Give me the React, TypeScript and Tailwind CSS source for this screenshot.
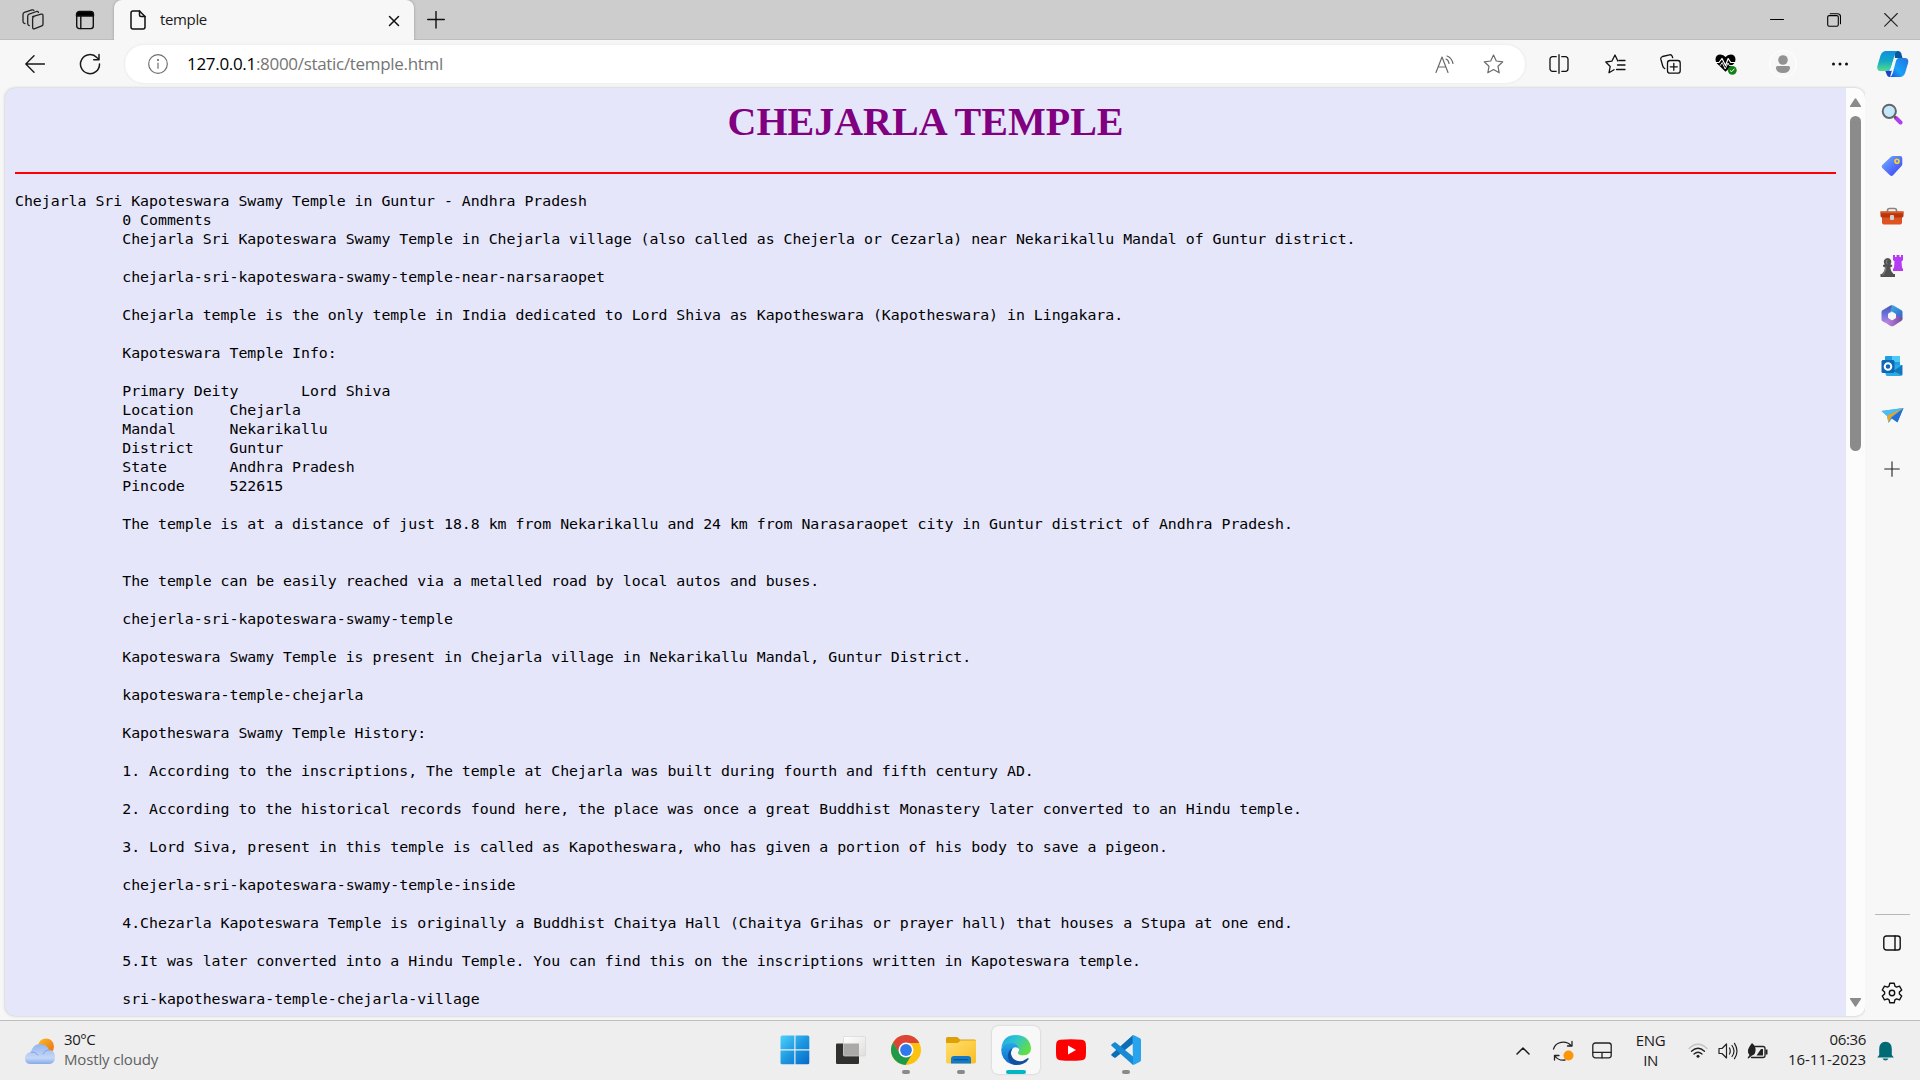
import React from "react";

type IconProps = { w: number; h: number; children: React.ReactNode; stroke?: string; sw?: number; className?: string };

function Icon({ w, h, children, stroke = "none", sw = 1.4, className = "" }: IconProps) {
  return (
    <svg
      width={w}
      height={h}
      viewBox={`0 0 ${w} ${h}`}
      fill="none"
      stroke={stroke}
      strokeWidth={sw}
      strokeLinecap="round"
      strokeLinejoin="round"
      className={`block shrink-0 ${className}`}
    >
      {children}
    </svg>
  );
}

function Slot({ className, children }: { className: string; children: React.ReactNode }) {
  return <div className={`flex shrink-0 items-center justify-center ${className}`}>{children}</div>;
}

const pad = " ".repeat(12);
const articleLines: string[] = [
  "Chejarla Sri Kapoteswara Swamy Temple in Guntur - Andhra Pradesh",
  pad + "0 Comments",
  pad + "Chejarla Sri Kapoteswara Swamy Temple in Chejarla village (also called as Chejerla or Cezarla) near Nekarikallu Mandal of Guntur district.",
  "",
  pad + "chejarla-sri-kapoteswara-swamy-temple-near-narsaraopet",
  "",
  pad + "Chejarla temple is the only temple in India dedicated to Lord Shiva as Kapotheswara (Kapotheswara) in Lingakara.",
  "",
  pad + "Kapoteswara Temple Info:",
  "",
  pad + "Primary Deity       Lord Shiva",
  pad + "Location    Chejarla",
  pad + "Mandal      Nekarikallu",
  pad + "District    Guntur",
  pad + "State       Andhra Pradesh",
  pad + "Pincode     522615",
  "",
  pad + "The temple is at a distance of just 18.8 km from Nekarikallu and 24 km from Narasaraopet city in Guntur district of Andhra Pradesh.",
  "",
  "",
  pad + "The temple can be easily reached via a metalled road by local autos and buses.",
  "",
  pad + "chejerla-sri-kapoteswara-swamy-temple",
  "",
  pad + "Kapoteswara Swamy Temple is present in Chejarla village in Nekarikallu Mandal, Guntur District.",
  "",
  pad + "kapoteswara-temple-chejarla",
  "",
  pad + "Kapotheswara Swamy Temple History:",
  "",
  pad + "1. According to the inscriptions, The temple at Chejarla was built during fourth and fifth century AD.",
  "",
  pad + "2. According to the historical records found here, the place was once a great Buddhist Monastery later converted to an Hindu temple.",
  "",
  pad + "3. Lord Siva, present in this temple is called as Kapotheswara, who has given a portion of his body to save a pigeon.",
  "",
  pad + "chejerla-sri-kapoteswara-swamy-temple-inside",
  "",
  pad + "4.Chezarla Kapoteswara Temple is originally a Buddhist Chaitya Hall (Chaitya Grihas or prayer hall) that houses a Stupa at one end.",
  "",
  pad + "5.It was later converted into a Hindu Temple. You can find this on the inscriptions written in Kapoteswara temple.",
  "",
  pad + "sri-kapotheswara-temple-chejarla-village",
];

function TabStrip() {
  return (
    <div className="flex h-10 shrink-0 bg-[#cdcdcd] shadow-[inset_0_-1px_0_#bdbdbd]">
      <Slot className="w-[65px]">
        <Icon w={24} h={24} stroke="#222" sw={1.3}>
          <path d="M11.5 8.6 20 6.2q2-.5 2 1.500v8.600q0 1.200-1.200 1.600l-7 2.700q-2.200.8-2.200-1.400v-8.400q0-1.600 1.400-2.200z" />
          <path d="M8.300 17.600q-1.600-.3-1.600-2V8.200q0-1.600 1.400-2.100L15.500 3.500q1.500-.4 2 .9" />
          <path d="M4 15.600q-2-.3-2-2V6.500q0-1.600 1.400-2.100L11 1.900q1.300-.4 1.900.6" />
        </Icon>
      </Slot>
      <Slot className="w-10">
        <Icon w={20} h={20} stroke="#111" sw={1.4}>
          <rect x="1.7" y="2.2" width="16.6" height="16.4" rx="2.5" />
          <path d="M1.500 6V4.500A3 3 0 0 1 4.500 1.500h11a3 3 0 0 1 3 3V6z" fill="#000" />
          <path d="M5.800 6v12.500" />
        </Icon>
      </Slot>
      <div className="w-[9px] shrink-0" />
      <div className="flex w-[300px] shrink-0 items-center rounded-t-lg bg-[#f7f7f7] shadow-[0_0_3px_#999] [clip-path:inset(0_-3px_0_-3px)]">
        <Icon w={16} h={20} stroke="#111" sw={1.5} className="ml-4">
          <path d="M3 1h6.500L15 6.500V17a2 2 0 0 1-2 2H3a2 2 0 0 1-2-2V3a2 2 0 0 1 2-2z" />
          <path d="M9.500 1v4a1.500 1.500 0 0 0 1.500 1.500h4" />
        </Icon>
        <span className="mb-[2px] ml-3.5 w-[220px] text-[15px] leading-5 tracking-[-0.35px] text-[#1b1b1b]">temple</span>
        <Icon w={12} h={12} stroke="#111" sw={1.5} className="ml-2 mt-px">
          <path d="M1.500 1.500l9 9M10.500 1.500l-9 9" />
        </Icon>
      </div>
      <Slot className="w-[43px]">
        <Icon w={18} h={18} stroke="#111" sw={1.4}>
          <path d="M.7 8.500h16.600M9 .5v16.500" />
        </Icon>
      </Slot>
      <div className="flex-1" />
      <Slot className="w-[57px]">
        <Icon w={14} h={14} stroke="#000" sw={1}>
          <path d="M.5 6.500h13" />
        </Icon>
      </Slot>
      <Slot className="w-[57px]">
        <Icon w={14} h={14} stroke="#000" sw={1.1}>
          <rect x=".7" y="2.6" width="10.6" height="10.6" rx="1.5" />
          <path d="M3.200.7h7.300a3 3 0 0 1 3 3v7" />
        </Icon>
      </Slot>
      <Slot className="w-[58px]">
        <Icon w={14} h={14} stroke="#222" sw={1.1}>
          <path d="M.7.500l12.600 12.600M13.300.500L.7 13.100" />
        </Icon>
      </Slot>
    </div>
  );
}

function Copilot() {
  return (
    <Icon w={32} h={28}>
      <defs>
        <linearGradient id="cpA" x1="0" y1="0" x2="0" y2="1">
          <stop offset="0" stopColor="#0f8fe0" />
          <stop offset=".5" stopColor="#12a9c4" />
          <stop offset="1" stopColor="#55dd8c" />
        </linearGradient>
        <linearGradient id="cpB" x1="0" y1="1" x2="1" y2="0">
          <stop offset="0" stopColor="#1a4fd8" />
          <stop offset=".4" stopColor="#17a3f6" />
          <stop offset="1" stopColor="#2470e0" />
        </linearGradient>
      </defs>
      <path d="M17 1h4.500q2 0 2.800 2.500L25.500 8H18z" fill="#0b55a0" />
      <path d="M8 20h7l-2 7q-2.500 0-3.200-2.200z" fill="#1743cf" />
      <path d="M9 1h12q-2.500.5-3.400 4l-3.400 12.500q-1 3.500-4.500 3.500H4q-4.600 0-3.600-5L3.500 5.500Q5 1 9 1z" fill="url(#cpA)" />
      <path d="M22 8h5.500q4.600 0 3.600 5l-3 10q-1.500 4-5.500 4H12.500q2.400-.6 3.300-4l3-11.500Q19.800 8 22 8z" fill="url(#cpB)" />
      <path d="M18.500 9.500h-2l-3 9.500q-.6 1.500-2 2h3z" fill="#f4f9fc" />
    </Icon>
  );
}

function Toolbar() {
  return (
    <div className="flex h-12 shrink-0 items-center bg-[#f7f7f7]">
      <Slot className="w-[70px]">
        <Icon w={20} h={18} stroke="#1a1a1a" sw={1.4}>
          <path d="M19.500 9H.8M9 .7.8 9 9 17.300" />
        </Icon>
      </Slot>
      <Slot className="w-10">
        <Icon w={22} h={22} stroke="#1a1a1a" sw={1.5}>
          <path d="M20.500 11A9.500 9.500 0 1 1 17.800 4.500L20 6.500M20 1.500v5.300h-5.300" />
        </Icon>
      </Slot>
      <div className="ml-[15px] flex h-[38px] w-[1400px] shrink-0 items-center rounded-full bg-white shadow-[0_0_3px_#e2e2e2]">
        <Icon w={20} h={20} stroke="#707070" sw={1.2} className="ml-[22.500px]">
          <circle cx="10" cy="10" r="9.3" />
          <path d="M10 9v5.300" />
          <circle cx="10" cy="6" r=".5" fill="#707070" />
        </Icon>
        <span className="ml-[19.500px] w-[1228px] shrink-0 whitespace-nowrap text-[17px] leading-6 tracking-[-0.310px] text-[#757575]">
          <span className="text-black">127.0.0.1</span>:8000/static/temple.html
        </span>
        <Slot className="w-[60px]">
          <Icon w={20} h={19} stroke="#6b6b6b" sw={1.2}>
            <path d="M1 17.500 7 2l6 15.500M3.300 12h7.500M11 4q2.500 1 3 4.500M12 1q4.500 1.500 6 7.500" />
          </Icon>
        </Slot>
        <Slot className="w-[37px]">
          <Icon w={21} h={20} stroke="#6b6b6b" sw={1.2}>
            <path d="M10.500 1l2.800 6 6.500.8-4.800 4.500 1.200 6.500-5.700-3.200-5.700 3.200L6 12.300 1.200 7.800 7.700 7z" />
          </Icon>
        </Slot>
      </div>
      <Slot className="ml-[6px] w-14">
        <Icon w={20} h={20} stroke="#111" sw={1.3}>
          <path d="M10 .7v18.600M7.200 2.700H3.500a2.500 2.500 0 0 0-2.500 2.500v9.600a2.500 2.500 0 0 0 2.500 2.500h3.700M12.800 2.700h3.700A2.500 2.500 0 0 1 19 5.200v9.600a2.500 2.500 0 0 1-2.500 2.500h-3.700" />
        </Icon>
      </Slot>
      <Slot className="w-14">
        <Icon w={21} h={20} stroke="#111" sw={1.3}>
          <path d="M9 15.700 4 18.700l1.200-6.200L.8 8l6-.8L10 1l2.800 6M14 6.500h6M12.500 11H20M11.500 15.500H20" />
        </Icon>
      </Slot>
      <Slot className="w-[55px]">
        <Icon w={21} h={20} stroke="#111" sw={1.3}>
          <rect x="7.5" y="6.5" width="12.7" height="12.7" rx="2.5" />
          <path d="M13.800 9.300v7M10.300 12.800h7M4.700 14.500 4 14Q3 13.400 2.600 11.500L.9 5.500Q.4 3.200 2.500 2.500L9.500.8q2-.4 2.800 1.600l.4 1.300" />
        </Icon>
      </Slot>
      <Slot className="w-14">
        <Icon w={22} h={22}>
          <path d="M10.500 18.800 2 10.500Q.5 8.500.5 6.500.7 1.500 5.500 1.500q3 0 5 2.500 2-2.500 5-2.500 4.800 0 5 5 0 2-1.500 4z" fill="#000" />
          <path d="M0 9.500h4L7 5.500l3.500 7 2.700-7 2.500 4h5" stroke="#fff" strokeWidth="1.200" />
          <path d="M5.200 12.500 7.200 9.500l3 6.500 2.800-6 1.300 2.500h3" stroke="#fff" strokeWidth=".9" />
          <circle cx="17.3" cy="17.3" r="4.4" fill="#138017" />
          <path d="m15.300 17.700 1.400 1 2.500-2.700" stroke="#fff" strokeWidth="1" />
        </Icon>
      </Slot>
      <Slot className="w-[58px]">
        <Icon w={28} h={28}>
          <circle cx="14" cy="14" r="13.5" fill="#f7f7f7" stroke="#fff" strokeWidth="1" />
          <circle cx="14" cy="10" r="4.8" fill="#929292" />
          <path d="M8.500 16h11q1.700 0 1.500 2-.5 5-7 5t-7-5q-.2-2 1.500-2z" fill="#929292" />
        </Icon>
      </Slot>
      <Slot className="w-14">
        <Icon w={18} h={4}>
          <g fill="#111">
            <circle cx="2.500" cy="2" r="1.500" />
            <circle cx="9" cy="2" r="1.500" />
            <circle cx="15.500" cy="2" r="1.500" />
          </g>
        </Icon>
      </Slot>
      <Slot className="w-[50px]">
        <Copilot />
      </Slot>
    </div>
  );
}

function Page() {
  return (
    <div className="ml-[5px] flex h-[928px] w-[1860px] shrink-0 overflow-hidden rounded-[10px] bg-[#e6e6fa] shadow-[0_0_3px_#bbb]">
      <div className="w-[1841px] shrink-0 px-[10px]">
        <h1 className="pt-[11px] text-center font-['Liberation_Serif',serif] text-[40px] font-bold leading-[46px] text-[#800080]">
          CHEJARLA TEMPLE
        </h1>
        <hr className="mt-[27px] border-0 border-t-2 border-[#ff0000]" />
        <pre className="mt-[18px] font-['DejaVu_Sans_Mono',monospace] text-[14.850px] leading-[19px] text-black">
          {articleLines.join("\n")}
        </pre>
      </div>
      <div className="flex w-[19px] shrink-0 flex-col items-center bg-[#fcfcfc]">
        <Icon w={11} h={9} className="mt-[10px]">
          <path d="M5.500 1 10.500 8.500h-10z" fill="#8b8b8b" stroke="#8b8b8b" />
        </Icon>
        <div className="mt-[9px] h-[335px] w-[11px] rounded-full bg-[#8b8b8b]" />
        <div className="flex-1" />
        <Icon w={11} h={9} className="mb-[9px]">
          <path d="M5.500 8 .5.500h10z" fill="#8b8b8b" stroke="#8b8b8b" />
        </Icon>
      </div>
    </div>
  );
}

function Sidebar() {
  return (
    <div className="flex w-[55px] shrink-0 flex-col items-center bg-[#f7f7f7] pr-px">
      <Slot className="h-[52px]">
        <Icon w={22} h={22}>
          <path d="m15 15 4.500 4.500" stroke="#b03df0" strokeWidth="4" />
          <path d="m13 13 1.500 1.500" stroke="#555" strokeWidth="2" />
          <circle cx="8.300" cy="8.300" r="6.600" fill="#c4e8fb" stroke="#666" strokeWidth="2" />
        </Icon>
      </Slot>
      <Slot className="h-[51px]">
        <Icon w={22} h={22}>
          <defs>
            <linearGradient id="tagFill" x1="0" y1="0" x2="1" y2="1">
              <stop offset="0" stopColor="#72b6ff" />
              <stop offset="1" stopColor="#3838f5" />
            </linearGradient>
          </defs>
          <path d="M12 1h7q2.300 0 2.300 2.300V9q0 1-.8 2L12 20.300q-1.500 1.500-3 0L1.300 13q-1.300-1.500 0-3L10 1.700Q11 1 12 1z" fill="url(#tagFill)" />
          <circle cx="16" cy="6.300" r="2" fill="#6e7cf0" stroke="#ffd426" strokeWidth="1.600" />
        </Icon>
      </Slot>
      <Slot className="h-[50px]">
        <Icon w={24} h={18}>
          <path d="M7.500 5V3.500q0-2 2-2h5q2 0 2 2V5" stroke="#858585" strokeWidth="1.600" />
          <path d="M2 8h20v7.500q0 2-2 2H4q-2 0-2-2z" fill="#dd5322" />
          <path d="M.5 4.500h23V9q0 1.500-2 1.500h-19Q.5 10.500.5 9z" fill="#b9360d" />
          <path d="M.5 4.500h23v1.800H.5z" fill="#de5b26" />
          <rect x="10" y="8" width="4" height="5" rx="1" fill="#d0d0d0" />
        </Icon>
      </Slot>
      <Slot className="h-[49px]">
        <Icon w={24} h={24}>
          <path d="M13 1h2v2h1.500V1h3v2H21V1h2v5l-1.500 1.500.5 6 1 1.500v2H13v-2l1-1.500.5-6L13 6z" fill="#b63cf4" />
          <path d="M7.500 4a4 4 0 0 1 3 6.500l1.700.5v1.500l-2 1q.3 3.500 3.300 6.500H15v3H.5v-3H2q3-3 3-6.500l-2-1V11l1.600-.5A4 4 0 0 1 7.500 4z" fill="#515151" />
          <path d="M7 6q-2 2 0 4M6 13q0 4-3 8" stroke="#858585" strokeWidth="1" />
        </Icon>
      </Slot>
      <Slot className="h-[51px]">
        <Icon w={22} h={22}>
          <defs>
            <linearGradient id="msA" x1="0" y1="0" x2="0" y2="1">
              <stop offset="0" stopColor="#4a55b5" />
              <stop offset=".5" stopColor="#6672d8" />
              <stop offset="1" stopColor="#b583e4" />
            </linearGradient>
            <linearGradient id="msB" x1="0" y1="0" x2="1" y2="1">
              <stop offset="0" stopColor="#3cb5ea" />
              <stop offset="1" stopColor="#3462c8" />
            </linearGradient>
            <linearGradient id="msC" x1="0" y1="0" x2="1" y2="0">
              <stop offset="0" stopColor="#c18be8" />
              <stop offset="1" stopColor="#7c479f" />
            </linearGradient>
          </defs>
          <path d="M11 .3 7 3l2 6 2-2 4 2.200V13l6.500 1V7q0-1.200-1-1.800L12.500.6Q11.700.1 11 .3z" fill="url(#msB)" />
          <path d="M21.500 13.500q0 1.700-1 2.300l-8 5.100q-1.500.8-3 0L4 17.500 8.500 13l2.500 2 4-2.300V10z" fill="url(#msC)" />
          <path d="M11 .3Q9.500.3 9 .8L1.500 5.200q-1 .6-1 1.800v7.500q0 1.200 1 1.800l2 1.200q2.500 0 3.800-1.500L9 14l-2-2V9.500L9 8z" fill="url(#msA)" />
          <path d="M11 7l3.500 2v4L11 15l-3.500-2V9z" fill="#f7f7f7" stroke="#f7f7f7" strokeWidth=".6" />
        </Icon>
      </Slot>
      <Slot className="h-[49px]">
        <Icon w={22} h={22}>
          <rect x="4" y="1" width="15" height="14" rx="1" fill="#1e9fe0" />
          <path d="M11 1h8v6h-8z" fill="#4bc9f7" />
          <path d="M4.500 10h16.800v9q0 2-2 2H6.500q-2 0-2-2z" fill="#2ba9e9" />
          <path d="m21.300 10-9 6 9 4.500z" fill="#1577b9" />
          <rect x=".5" y="5" width="13" height="13" rx="1.500" fill="#0e66b4" />
          <circle cx="7" cy="11.500" r="3.300" stroke="#fff" strokeWidth="2" />
        </Icon>
      </Slot>
      <Slot className="h-[51px]">
        <Icon w={23} h={18}>
          <path d="M.5 4 22.500 1 16.500 15 11 11.500 7.500 16 6 9z" fill="#35a7f1" />
          <path d="M22.500 1 16.500 15.500 10 11z" fill="#246fd4" />
          <path d="M22.500 1 6 8.500l1.500 7.200L10 10z" fill="#f2a31c" />
          <path d="M.5 4 22.500 1 6 8.500z" fill="#49bdf5" />
        </Icon>
      </Slot>
      <Slot className="h-[56px]">
        <Icon w={16} h={16} stroke="#222" sw={1.1}>
          <path d="M.7 8h14.600M8 .7v14.600" />
        </Icon>
      </Slot>
      <div className="flex-1" />
      <div className="h-px w-[35px] bg-[#b8b8b8]" />
      <Slot className="h-[55px]">
        <Icon w={18} h={16} stroke="#111" sw={1.4}>
          <rect x=".8" y="1" width="16.4" height="14" rx="2.5" />
          <path d="M12 1v14" />
        </Icon>
      </Slot>
      <Slot className="mb-1 h-[46px]">
        <Icon w={22} h={22} stroke="#111" sw={1.4}>
          <path d="M8.800 1.200h4.400l.7 3 1.600.9 3-1 2.200 3.900-2.300 2.100v1.800l2.300 2.100-2.200 3.900-3-1-1.600.9-.7 3H8.800l-.7-3-1.600-.9-3 1L1.300 14l2.300-2.100v-1.800L1.300 8l2.200-3.900 3 1 1.600-.9z" />
          <circle cx="11" cy="11" r="2.700" />
        </Icon>
      </Slot>
    </div>
  );
}

function Running({ active = false }: { active?: boolean }) {
  return (
    <div
      className={
        active
          ? "absolute bottom-0 left-1/2 h-1 w-5 -translate-x-1/2 rounded-full bg-[#00b7c3]"
          : "absolute bottom-0 left-1/2 h-1 w-2 -translate-x-1/2 rounded-full bg-[#8a8a8a]"
      }
    />
  );
}

function AppButton({ children, running, active }: { children: React.ReactNode; running?: boolean; active?: boolean }) {
  return (
    <div className="flex w-[55px] shrink-0 justify-center">
      <div
        className={
          active
            ? "relative flex size-12 items-center justify-center rounded-md bg-[#f8f8f8] shadow-[0_0_2px_#bbb]"
            : "relative flex size-12 items-center justify-center"
        }
      >
        {children}
        {running && <Running active={active} />}
      </div>
    </div>
  );
}

function Taskbar() {
  return (
    <div className="flex h-[60px] shrink-0 border-t border-[#bdbdbd] bg-[#eeeeee]">
      <div className="flex w-[768px] shrink-0 items-center">
        <Icon w={32} h={28} className="ml-[24px]">
          <defs>
            <linearGradient id="cloud" x1="0" y1="0" x2="0" y2="1">
              <stop offset="0" stopColor="#93b5ee" />
              <stop offset=".7" stopColor="#c5d7f7" />
              <stop offset="1" stopColor="#85a9ea" />
            </linearGradient>
            <linearGradient id="sun" x1="0" y1="0" x2="1" y2="1">
              <stop offset="0" stopColor="#f9bd24" />
              <stop offset="1" stopColor="#ee6a13" />
            </linearGradient>
          </defs>
          <circle cx="22" cy="9.500" r="8" fill="url(#sun)" />
          <path d="M7 27q-6 0-6-5.500T7 15q2-8 9-8t9 6q6 0 6 7t-6 7z" fill="url(#cloud)" />
          <path d="M7 15q4-1 7 3M25 13q-4 0-6 4" stroke="#7da2e4" strokeWidth="1" />
        </Icon>
        <div className="mb-1 ml-2 text-[15px] leading-5 tracking-[-0.45px] text-[#1b1b1b]">
          <div>30°C</div>
          <div className="tracking-[-0.150px] text-[#616161]">Mostly cloudy</div>
        </div>
      </div>
      <div className="flex w-[386px] shrink-0 pt-[5px]">
        <AppButton>
          <Icon w={30} h={30} className="-ml-px">
            <defs>
              <linearGradient id="win" x1="0" y1="0" x2="1" y2="1">
                <stop offset="0" stopColor="#4fd0fb" />
                <stop offset=".5" stopColor="#1d98e2" />
                <stop offset="1" stopColor="#0669c8" />
              </linearGradient>
            </defs>
            <path d="M2 .5h12.300v13.800H.5V2Q.5.500 2 .5zM15.500.500h12.300q1.500 0 1.500 1.500v12.300H15.500zM.5 15.500h13.800v13.800H2q-1.500 0-1.500-1.500zM15.500 15.500h13.800v12.300q0 1.500-1.500 1.500H15.500z" fill="url(#win)" />
          </Icon>
        </AppButton>
        <AppButton>
          <Icon w={30} h={28}>
            <defs>
              <linearGradient id="tvw" x1="0" y1="0" x2="1" y2="1">
                <stop offset="0" stopColor="#fff" />
                <stop offset="1" stopColor="#dedede" />
              </linearGradient>
            </defs>
            <rect x="0" y="7.500" width="23" height="20.500" rx="1" fill="#30302e" />
            <rect x="7.500" y=".5" width="22" height="19.500" rx="1" fill="url(#tvw)" stroke="#d5d5d5" strokeWidth=".7" />
            <path d="M8 7.500h15V19.800H8z" fill="#aaa9a8" />
          </Icon>
        </AppButton>
        <AppButton running>
          <Icon w={30} h={30}>
            <circle cx="15" cy="15" r="15" fill="#fdc20f" />
            <path d="M15 15 15 8h13.300A15 15 0 0 0 2 7.500l6.500 11.300z" fill="#db4437" />
            <path d="M2 7.500A15 15 0 0 0 14.500 30l6.800-11.500L15 15l-6 4z" fill="#1e9a4a" />
            <circle cx="15" cy="15" r="7.500" fill="#fff" />
            <circle cx="15" cy="15" r="5.900" fill="#3079ed" />
          </Icon>
        </AppButton>
        <AppButton running>
          <Icon w={30} h={28}>
            <defs>
              <linearGradient id="folder" x1="0" y1="0" x2="1" y2="1">
                <stop offset="0" stopColor="#ffdf72" />
                <stop offset="1" stopColor="#fabd20" />
              </linearGradient>
            </defs>
            <path d="M1.500 1h9q1 0 1.700.8L14 3.500h14.500Q30 3.500 30 5v8H0V2.500Q0 1 1.500 1z" fill="#dda006" />
            <path d="M0 7h11q1 0 2-1l1.500-1.500H30v21q0 2-2 2H2q-2 0-2-2z" fill="url(#folder)" />
            <path d="M5 27.500V23q0-3 3-3h14q3 0 3 3v4.500z" fill="#1379c9" />
            <path d="M8.500 23.700h13" stroke="#0c559b" strokeWidth="1.300" />
          </Icon>
        </AppButton>
        <AppButton running active>
          <Icon w={30} h={30}>
            <defs>
              <linearGradient id="edgeTop" x1="0" y1="0" x2="1" y2=".5">
                <stop offset="0" stopColor="#1da7e3" />
                <stop offset=".5" stopColor="#30c5cf" />
                <stop offset="1" stopColor="#60de45" />
              </linearGradient>
              <linearGradient id="edgeSide" x1="0" y1="0" x2="0" y2="1">
                <stop offset="0" stopColor="#25a9e5" />
                <stop offset="1" stopColor="#0b66cd" />
              </linearGradient>
            </defs>
            <path d="M.3 13Q2 0 15 0q13.500.5 15 13 0 7-7 7.300-6 0-6-2.300 0-1 .8-2 .7-1.200 0-2.800Q16 9.500 10 9.500 4 9.500.3 13z" fill="url(#edgeTop)" />
            <path d="M.2 14Q3 8 10 8q7 .3 8 6-3-3-6-1-3 3-1.500 8 2 6 8 8Q14 30.500 10 29 0 25 .2 14z" fill="url(#edgeSide)" />
            <path d="M11.500 13q-4 7 2 11.500 6 4 13-1.300 1.700-.5 1 1Q24 30 15 30q-6-.5-8-7-1-7 4.500-10z" fill="#1150a0" />
          </Icon>
        </AppButton>
        <AppButton>
          <Icon w={30} h={22}>
            <path d="M4 .8Q15-.5 26 .8q3.500.5 3.800 4 .5 6.200 0 12.400-.3 3.500-3.800 4-11 1-22 0-3.500-.5-3.800-4-.5-6.200 0-12.400.3-3.500 3.800-4z" fill="#f00" />
            <path d="m12 6.500 8 4.500-8 4.500z" fill="#fff" />
          </Icon>
        </AppButton>
        <AppButton running>
          <Icon w={30} h={30}>
            <path d="M22 0v8.500L4.800 22.500q-.8.700-1.700 0L.7 20.700q-1-.9 0-1.800z" fill="#0c6eb4" />
            <path d="M22 30v-8.500L4.800 7.500q-.8-.7-1.700 0L.7 9.300q-1 .9 0 1.800z" fill="#168bd3" />
            <path d="M21.500.5Q22 0 23 .3l6 3q1 .5 1 1.700v20q0 1.200-1 1.700l-6 3q-1 .3-1.500-.2l.5-.6z" fill="#2aa3ef" />
          </Icon>
        </AppButton>
      </div>
      <div className="flex flex-1 items-center justify-end">
        <Slot className="w-10">
          <Icon w={14} h={8} stroke="#1b1b1b" sw={1.5}>
            <path d="m1 7 6-6 6 6" />
          </Icon>
        </Slot>
        <Slot className="w-10">
          <Icon w={22} h={22} stroke="#222" sw={1.3}>
            <path d="M1.500 9A10 9 0 0 1 19 5.500M20 1.500V6h-4.500M2.500 20v-4.500H7M3 16q3.500 5 10 4" />
            <circle cx="16.500" cy="15.500" r="5" fill="#ff9500" stroke="none" />
          </Icon>
        </Slot>
        <Slot className="mb-px w-[38px]">
          <Icon w={20} h={17} stroke="#222" sw={1.3}>
            <rect x=".8" y="1" width="18.4" height="14.8" rx="2.5" />
            <path d="M1 10.300h18M10 10.300v5.500" />
          </Icon>
        </Slot>
        <div className="mb-[2px] w-[59px] shrink-0 text-center text-[15px] leading-5 tracking-[-0.4px] text-[#1b1b1b]">
          <div>ENG</div>
          <div>IN</div>
        </div>
        <Slot className="w-[35px]">
          <Icon w={20} h={16} stroke="#222" sw={1.3}>
            <path d="M1 5.500q9-8.500 18 0" stroke="#c3c3c3" />
            <path d="M3.500 8.300q6.500-6 13 0M6 11q4-3.600 8 0" />
            <circle cx="10" cy="13.300" r="1.500" fill="#222" stroke="none" />
          </Icon>
        </Slot>
        <Slot className="w-[26px]">
          <Icon w={20} h={18} stroke="#222" sw={1.2}>
            <path d="M1 6.500h3L8.500 2v14L4 11.500H1zM11.500 6q1.500 3 0 6M14 3.500q4 5.500 0 11M16.500 1.300q5 7.700 0 15.400" />
          </Icon>
        </Slot>
        <Slot className="w-[33px]">
          <Icon w={21} h={18}>
            <path d="M7 4.500h9q2 0 2 2v7q0 2-2 2H4.500" stroke="#222" strokeWidth="1.300" />
            <path d="M18.500 7.500h2v5h-2z" fill="#222" />
            <path d="M5 1q4 3 3.500 8-.5 4-3.500 4.500L1.500 16.500.5 16l2-3Q.5 11 1 8q.5-2.500 4-7zM9.500 13.500 14 7h2v6.500z" fill="#222" />
          </Icon>
        </Slot>
        <div className="mb-1 w-[92px] shrink-0 whitespace-nowrap text-right text-[15px] leading-5 text-[#1b1b1b]">
          <div className="tracking-[-0.350px]">06:36</div>
          <div className="tracking-[-0.020px]">16-11-2023</div>
        </div>
        <Icon w={17} h={20} className="ml-[11px] mr-[26px]">
          <path d="M2.200 14V8q0-6.800 6.300-7.200Q14.800 1.200 14.800 8v6l2 2.500H.2zM5.500 17.500h6q-1 2-3 2t-3-2z" fill="#006b75" />
        </Icon>
      </div>
    </div>
  );
}

export default function App() {
  return (
    <div className="flex h-[1080px] w-[1920px] flex-col overflow-hidden bg-[#f7f7f7] font-['Open_Sans','Noto_Sans',sans-serif]">
      <TabStrip />
      <Toolbar />
      <div className="flex h-[932px] shrink-0">
        <Page />
        <Sidebar />
      </div>
      <Taskbar />
    </div>
  );
}
